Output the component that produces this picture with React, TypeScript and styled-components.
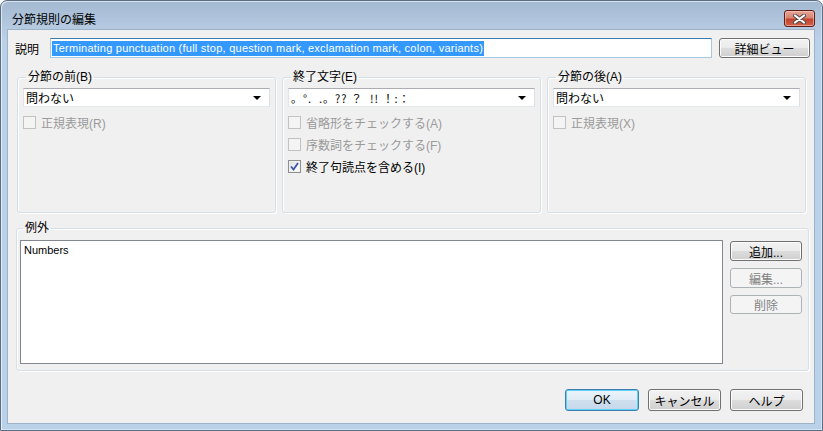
import React from 'react';
import styled, { createGlobalStyle, css } from 'styled-components';

const GlobalStyle = createGlobalStyle`
  html, body {
    margin: 0;
    padding: 0;
    background: #ffffff;
  }
  body {
    font-family: "Liberation Sans", "Noto Sans CJK JP", sans-serif;
    font-size: 12px;
    color: #000;
  }
`;

const uiFont = `"Liberation Sans", "Noto Sans CJK JP", sans-serif`;

/* window frame */
const Window = styled.div`
  width: 823px;
  height: 431px;
  box-sizing: border-box;
  border: 1px solid #5b6d80;
  border-radius: 7px 7px 0 0;
  background: linear-gradient(#a3b9d1 0px, #b6cbe2 28px, #bad1ea 40px, #bad1ea 100%);
  padding: 0 7px 6px 6px;
  display: flex;
  flex-direction: column;
  box-shadow: inset 1px 1px 0 rgba(255, 255, 255, 0.6), inset -1px -1px 0 rgba(255, 255, 255, 0.4);
`;

const TitleBar = styled.div`
  height: 28px;
  box-sizing: border-box;
  display: flex;
  align-items: flex-end;
  justify-content: space-between;
  padding: 0 0 2px 5px;
`;

const Title = styled.div`
  font-family: "Noto Sans CJK JP", sans-serif;
  font-size: 12px;
  line-height: 17px;
  height: 17px;
  color: #000;
`;

const CloseButton = styled.div`
  width: 31px;
  height: 17px;
  box-sizing: border-box;
  border: 1px solid #5c1d14;
  border-radius: 3px;
  background: linear-gradient(#e7a597 0%, #d98472 45%, #c3442e 55%, #cf6046 100%);
  box-shadow: inset 0 0 0 1px rgba(255, 210, 200, 0.55);
  display: flex;
  align-items: center;
  justify-content: center;
`;

const Client = styled.div`
  flex: 1;
  background: #f0f0f0;
  border: 1px solid #9eb2c7;
  display: flex;
  flex-direction: column;
`;

/* description row */
const DescRow = styled.div`
  display: flex;
  align-items: center;
  gap: 7px;
  height: 20px;
  margin: 8px 0 0 7px;
`;

const FieldLabel = styled.span`
  width: 28px;
  font-family: "Noto Sans CJK JP", sans-serif;
  font-size: 12px;
`;

const TextBox = styled.div`
  width: 662px;
  height: 20px;
  box-sizing: border-box;
  background: #fff;
  border: 1px solid #a4c9e3;
  border-top-color: #3d7bad;
  display: flex;
  align-items: center;
  padding-left: 1px;
`;

const Selection = styled.span`
  background: #3399ff;
  color: #fff;
  font-family: ${uiFont};
  font-size: 11px;
  letter-spacing: 0.24px;
  line-height: 15px;
  padding: 0 1px;
  white-space: nowrap;
`;

const buttonBase = css`
  box-sizing: border-box;
  border: 1px solid #707070;
  border-radius: 3px;
  background: linear-gradient(#f2f2f2 0%, #ebebeb 50%, #dddddd 50%, #cfcfcf 100%);
  box-shadow: inset 0 0 0 1px #fcfcfc;
  font-family: ${uiFont};
  font-size: 12px;
  color: #000;
  padding: 0;
  display: flex;
  align-items: center;
  justify-content: center;
`;

const Button = styled.button<{ $w: number; $h?: number; $primary?: boolean }>`
  ${buttonBase};
  width: ${(p) => p.$w}px;
  height: ${(p) => p.$h ?? 22}px;

  ${(p) =>
    p.$primary &&
    css`
      border-color: #3c7fb1;
      background: linear-gradient(#eaf3fa 0%, #e0ecf6 50%, #cfdfee 50%, #c5d8ea 100%);
      box-shadow: inset 0 0 0 1px #61d0f6;
    `}

  &:disabled {
    border-color: #adb2b5;
    background: #f4f4f4;
    box-shadow: none;
    color: #838383;
  }
`;

/* rule groups */
const GroupRow = styled.div`
  display: grid;
  grid-template-columns: 259px 259px 259px;
  column-gap: 6px;
  margin: 12px 0 0 9px;
`;

const Group = styled.fieldset<{ $h: number; $pad?: string }>`
  margin: 0;
  height: ${(p) => p.$h}px;
  box-sizing: border-box;
  border: 1px solid #d5dfe5;
  border-radius: 3px;
  box-shadow: inset 1px 1px 0 #fff, 1px 1px 0 #fff;
  padding: ${(p) => p.$pad ?? '4px 5px 0 5px'};
  min-width: 0;
`;

const Legend = styled.legend`
  font-family: ${uiFont};
  font-size: 12px;
  line-height: 14px;
  padding: 0 2px;
  margin-left: 3px;
`;

const Combo = styled.div`
  height: 19px;
  box-sizing: border-box;
  background: #fff;
  border: 1px solid #e3e9ef;
  border-top-color: #abadb3;
  border-left-color: #e2e3ea;
  border-right-color: #dbdfe6;
  display: flex;
  align-items: center;
  justify-content: space-between;
  padding: 0 8px 0 2px;
  font-family: ${uiFont};
  font-size: 12px;
  white-space: pre;
`;

const Symbols = styled.span`
  font-family: "Noto Sans CJK JP", sans-serif;
  font-size: 11px;
  letter-spacing: 1px;
`;

const Arrow = styled.span`
  width: 0;
  height: 0;
  border-left: 4px solid transparent;
  border-right: 4px solid transparent;
  border-top: 4px solid #000;
  margin-top: 1px;
`;

const CheckList = styled.div`
  display: flex;
  flex-direction: column;
  gap: 8px;
  margin-top: 8px;
`;

const CheckRow = styled.label<{ $disabled?: boolean }>`
  display: flex;
  align-items: center;
  gap: 5px;
  height: 14px;
  font-family: ${uiFont};
  font-size: 12px;
  color: ${(p) => (p.$disabled ? '#9a9a9a' : '#000')};
`;

const Box = styled.span<{ $disabled?: boolean }>`
  width: 13px;
  height: 13px;
  box-sizing: border-box;
  border: 1px solid ${(p) => (p.$disabled ? '#c2c2c2' : '#8e8f8f')};
  background: ${(p) =>
    p.$disabled ? '#f4f4f4' : 'linear-gradient(135deg, #dcdcdc 0%, #f4f4f4 60%, #ffffff 100%)'};
  box-shadow: inset 0 0 0 1px ${(p) => (p.$disabled ? '#f4f4f4' : '#f0f0f0')};
  display: flex;
  align-items: center;
  justify-content: center;
`;

/* exceptions */
const ExceptRow = styled.div`
  margin: 8px 5px 0 8px;
`;

const ExceptBody = styled.div`
  display: flex;
  gap: 7px;
`;

const ListBox = styled.div`
  width: 703px;
  height: 124px;
  box-sizing: border-box;
  background: #fff;
  border: 1px solid #828790;
  padding: 3px 3px;
  font-family: ${uiFont};
  font-size: 11px;
  line-height: 13px;
`;

const SideButtons = styled.div`
  display: flex;
  flex-direction: column;
  gap: 7px;
  padding-top: 1px;
`;

const Footer = styled.div`
  display: flex;
  justify-content: flex-end;
  gap: 9px;
  margin: 18px 11px 0 0;
`;

type CheckProps = { label: string; disabled?: boolean; checked?: boolean };

const Check = ({ label, disabled, checked }: CheckProps) => (
  <CheckRow $disabled={disabled}>
    <Box $disabled={disabled}>
      {checked && (
        <svg width="9" height="9" viewBox="0 0 9 9">
          <path d="M1 4.5 L3.5 7.5 L8 1" fill="none" stroke="#3a55a8" strokeWidth="1.8" />
        </svg>
      )}
    </Box>
    {label}
  </CheckRow>
);

const App = () => {
  return (
    <>
      <GlobalStyle />
      <Window>
        <TitleBar>
          <Title>分節規則の編集</Title>
          <CloseButton>
            <svg width="13" height="10" viewBox="0 0 13 10">
              <path d="M2 1.5 L11 8.5 M11 1.5 L2 8.5" stroke="#4a4a4a" strokeWidth="4" strokeLinecap="round" />
              <path d="M2 1.5 L11 8.5 M11 1.5 L2 8.5" stroke="#ffffff" strokeWidth="2.2" strokeLinecap="round" />
            </svg>
          </CloseButton>
        </TitleBar>

        <Client>
          <DescRow>
            <FieldLabel>説明</FieldLabel>
            <TextBox>
              <Selection>
                Terminating punctuation (full stop, question mark, exclamation mark, colon, variants)
              </Selection>
            </TextBox>
            <Button $w={91} $h={20}>詳細ビュー</Button>
          </DescRow>

          <GroupRow>
            <Group $h={143}>
              <Legend>分節の前(B)</Legend>
              <Combo>
                問わない
                <Arrow />
              </Combo>
              <CheckList>
                <Check label="正規表現(R)" disabled />
              </CheckList>
            </Group>

            <Group $h={143}>
              <Legend>終了文字(E)</Legend>
              <Combo>
                <Symbols>{'。°.  .。?? ？  !! ！:：'}</Symbols>
                <Arrow />
              </Combo>
              <CheckList>
                <Check label="省略形をチェックする(A)" disabled />
                <Check label="序数詞をチェックする(F)" disabled />
                <Check label="終了句読点を含める(I)" checked />
              </CheckList>
            </Group>

            <Group $h={143}>
              <Legend>分節の後(A)</Legend>
              <Combo>
                問わない
                <Arrow />
              </Combo>
              <CheckList>
                <Check label="正規表現(X)" disabled />
              </CheckList>
            </Group>
          </GroupRow>

          <ExceptRow>
            <Group $h={150} $pad="5px 6px 0 3px">
              <Legend>例外</Legend>
              <ExceptBody>
                <ListBox>Numbers</ListBox>
                <SideButtons>
                  <Button $w={72} $h={20}>追加...</Button>
                  <Button $w={72} $h={20} disabled>編集...</Button>
                  <Button $w={72} $h={19} disabled>削除</Button>
                </SideButtons>
              </ExceptBody>
            </Group>
          </ExceptRow>

          <Footer>
            <Button $w={74} $primary>OK</Button>
            <Button $w={73}>キャンセル</Button>
            <Button $w={73}>ヘルプ</Button>
          </Footer>
        </Client>
      </Window>
    </>
  );
};

export default App;
